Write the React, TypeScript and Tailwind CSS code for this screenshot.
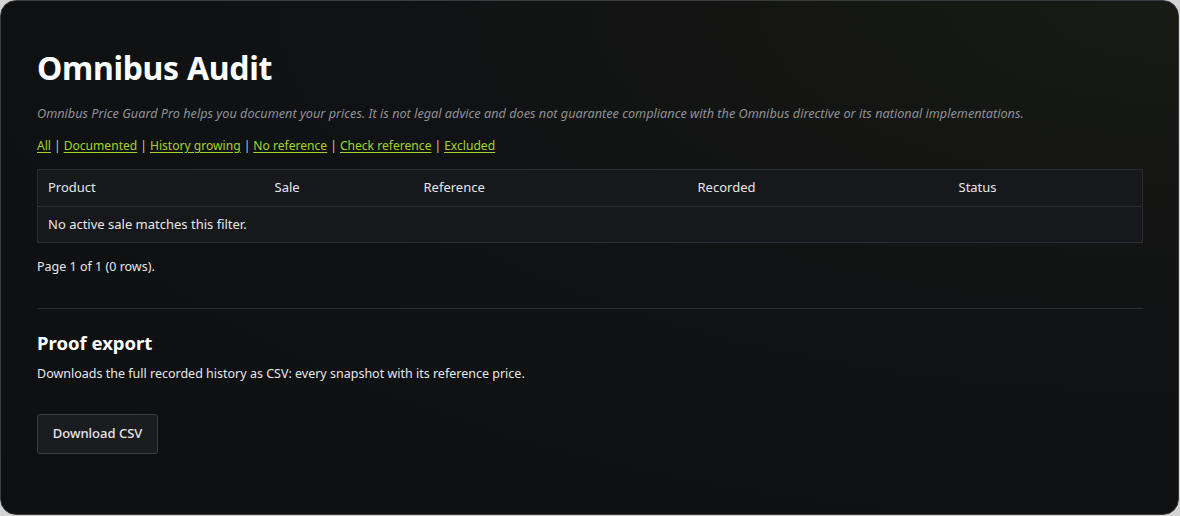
const filters = ['All', 'Documented', 'History growing', 'No reference', 'Check reference', 'Excluded'];

const columns = [
  { label: 'Product', w: 'w-[227px]' },
  { label: 'Sale', w: 'w-[149px]' },
  { label: 'Reference', w: 'w-[274px]' },
  { label: 'Recorded', w: 'w-[261px]' },
  { label: 'Status', w: '' },
];

export default function App() {
  return (
    <div className="h-[516px] w-[1180px] bg-[#d4d4d4] font-['Noto_Sans',sans-serif]">
      <div className="h-[515px] w-[1179px] overflow-hidden rounded-[16px] border border-[#3a3b3f] bg-[radial-gradient(ellipse_at_top_right,#181a14_0%,#111213_45%,#0e0f11_100%)] px-[36px] pt-[44px] text-[#e6e7e9]">
        <h1 className="text-[32px] font-bold leading-[46px] tracking-[-0.3px] text-white">Omnibus Audit</h1>

        <p className="mt-[13px] text-[12.7px] italic leading-[18px] text-[#8e9197]">
          Omnibus Price Guard Pro helps you document your prices. It is not legal advice and does not guarantee compliance with the Omnibus directive or its national implementations.
        </p>

        <div className="mt-[15px] text-[12.1px] leading-[18px] text-[#c9ccd1]">
          {filters.map((f, i) => (
            <span key={f}>
              {i > 0 && <span className="mx-[3px]">|</span>}
              <a href="#" className="text-[#a6d22e] underline underline-offset-2">{f}</a>
            </span>
          ))}
        </div>

        <table className="mt-[14px] w-[1106px] border-collapse border border-[#2b2d32] bg-[#17181c] text-left text-[13px]">
          <thead>
            <tr className="h-[37px] border-b border-[#2b2d32]">
              {columns.map((c) => (
                <th key={c.label} className={`${c.w} px-[10px] font-normal text-[#e6e7e9]`}>{c.label}</th>
              ))}
            </tr>
          </thead>
          <tbody>
            <tr className="h-[36px]">
              <td colSpan={5} className="px-[10px] text-[#e6e7e9]">No active sale matches this filter.</td>
            </tr>
          </tbody>
        </table>

        <p className="mt-[15px] text-[12.5px] leading-[18px] text-[#e6e7e9]">Page 1 of 1 (0 rows).</p>

        <hr className="mt-[32px] w-[1106px] border-[#2b2d32]" />

        <h2 className="mt-[20px] text-[18.5px] font-bold leading-[28px] text-white">Proof export</h2>
        <p className="mt-[8px] text-[12.5px] leading-[18px] text-[#e6e7e9]">
          Downloads the full recorded history as CSV: every snapshot with its reference price.
        </p>

        <button className="mt-[31px] h-[40px] w-[121px] rounded-[3px] border border-[#3a3c41] bg-[#1b1c20] text-[13px] font-medium text-[#e6e7e9]">
          Download CSV
        </button>
      </div>
    </div>
  );
}
